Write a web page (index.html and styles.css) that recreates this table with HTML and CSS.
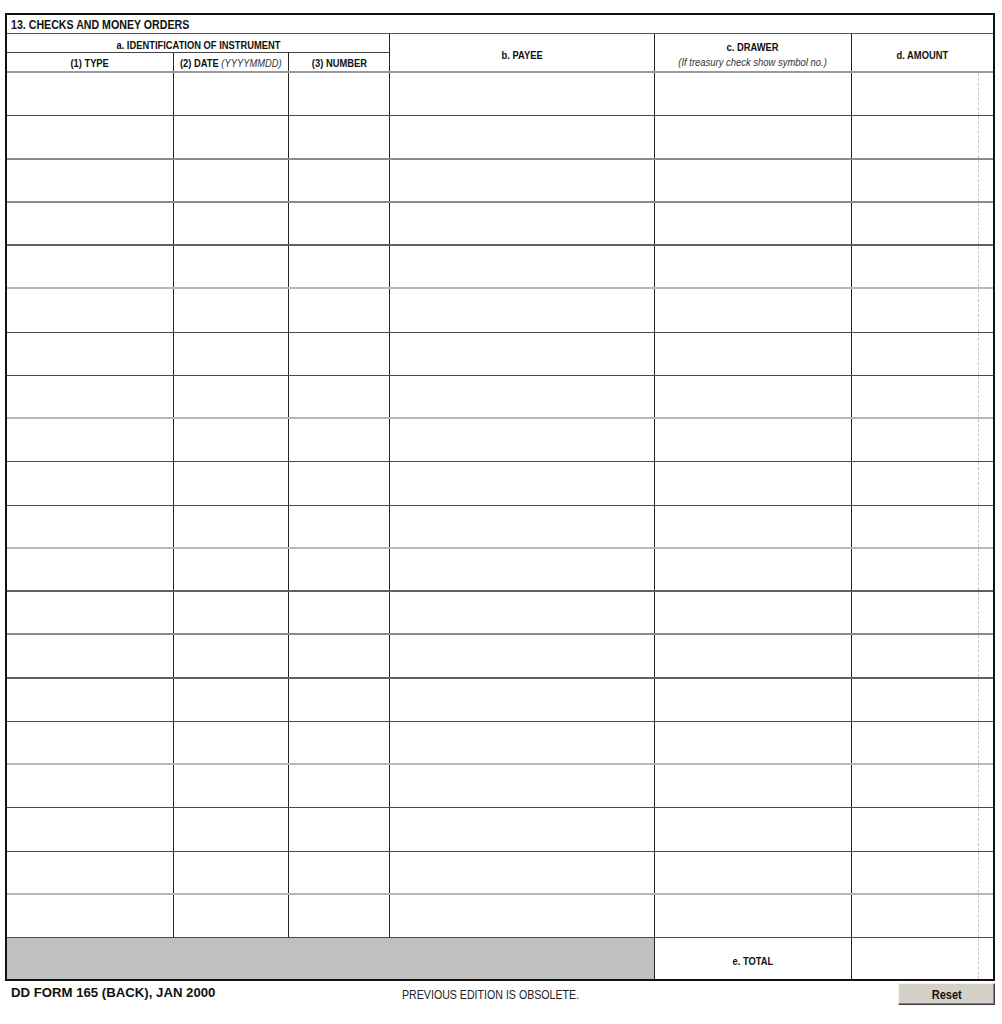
FILE: index.html
```html
<!DOCTYPE html>
<html>
<head>
<meta charset="utf-8">
<title>DD Form 165 (Back)</title>
<link rel="stylesheet" href="styles.css">
</head>
<body>
<div class="sheet">
  <div class="form">
    <div class="title"><span class="nl">13. CHECKS AND MONEY ORDERS</span></div>
    <div class="head">
      <div class="h-ident"><span class="nc">a. IDENTIFICATION OF INSTRUMENT</span></div>
      <div class="h-sub"><span class="nc">(1) TYPE</span></div>
      <div class="h-sub"><span class="nc">(2) DATE <i>(YYYYMMDD)</i></span></div>
      <div class="h-sub"><span class="nc">(3) NUMBER</span></div>
      <div class="h-payee"><span class="nc">b. PAYEE</span></div>
      <div class="h-drawer"><span class="nc">c. DRAWER</span><i class="nc">(If treasury check show symbol no.)</i></div>
      <div class="h-amount"><span class="nc">d. AMOUNT</span></div>
    </div>
    <div class="row ln-d"><div class="c"></div><div class="c"></div><div class="c"></div><div class="c"></div><div class="c"></div><div class="amt"><div class="dash"></div></div></div>
    <div class="row ln-m"><div class="c"></div><div class="c"></div><div class="c"></div><div class="c"></div><div class="c"></div><div class="amt"><div class="dash"></div></div></div>
    <div class="row ln-m"><div class="c"></div><div class="c"></div><div class="c"></div><div class="c"></div><div class="c"></div><div class="amt"><div class="dash"></div></div></div>
    <div class="row ln-k"><div class="c"></div><div class="c"></div><div class="c"></div><div class="c"></div><div class="c"></div><div class="amt"><div class="dash"></div></div></div>
    <div class="row ln-l"><div class="c"></div><div class="c"></div><div class="c"></div><div class="c"></div><div class="c"></div><div class="amt"><div class="dash"></div></div></div>
    <div class="row ln-d"><div class="c"></div><div class="c"></div><div class="c"></div><div class="c"></div><div class="c"></div><div class="amt"><div class="dash"></div></div></div>
    <div class="row ln-d"><div class="c"></div><div class="c"></div><div class="c"></div><div class="c"></div><div class="c"></div><div class="amt"><div class="dash"></div></div></div>
    <div class="row ln-l"><div class="c"></div><div class="c"></div><div class="c"></div><div class="c"></div><div class="c"></div><div class="amt"><div class="dash"></div></div></div>
    <div class="row ln-d"><div class="c"></div><div class="c"></div><div class="c"></div><div class="c"></div><div class="c"></div><div class="amt"><div class="dash"></div></div></div>
    <div class="row ln-d"><div class="c"></div><div class="c"></div><div class="c"></div><div class="c"></div><div class="c"></div><div class="amt"><div class="dash"></div></div></div>
    <div class="row ln-l"><div class="c"></div><div class="c"></div><div class="c"></div><div class="c"></div><div class="c"></div><div class="amt"><div class="dash"></div></div></div>
    <div class="row ln-k"><div class="c"></div><div class="c"></div><div class="c"></div><div class="c"></div><div class="c"></div><div class="amt"><div class="dash"></div></div></div>
    <div class="row ln-m"><div class="c"></div><div class="c"></div><div class="c"></div><div class="c"></div><div class="c"></div><div class="amt"><div class="dash"></div></div></div>
    <div class="row ln-k"><div class="c"></div><div class="c"></div><div class="c"></div><div class="c"></div><div class="c"></div><div class="amt"><div class="dash"></div></div></div>
    <div class="row ln-d"><div class="c"></div><div class="c"></div><div class="c"></div><div class="c"></div><div class="c"></div><div class="amt"><div class="dash"></div></div></div>
    <div class="row ln-l"><div class="c"></div><div class="c"></div><div class="c"></div><div class="c"></div><div class="c"></div><div class="amt"><div class="dash"></div></div></div>
    <div class="row ln-d"><div class="c"></div><div class="c"></div><div class="c"></div><div class="c"></div><div class="c"></div><div class="amt"><div class="dash"></div></div></div>
    <div class="row ln-d"><div class="c"></div><div class="c"></div><div class="c"></div><div class="c"></div><div class="c"></div><div class="amt"><div class="dash"></div></div></div>
    <div class="row ln-l"><div class="c"></div><div class="c"></div><div class="c"></div><div class="c"></div><div class="c"></div><div class="amt"><div class="dash"></div></div></div>
    <div class="row ln-d"><div class="c"></div><div class="c"></div><div class="c"></div><div class="c"></div><div class="c"></div><div class="amt"><div class="dash"></div></div></div>
    <div class="total">
      <div class="shade"></div>
      <div class="t-label"><span class="nc">e. TOTAL</span></div>
      <div class="amt"><div class="dash"></div></div>
    </div>
  </div>
  <div class="footer">
    <div class="f-form">DD FORM 165 (BACK), JAN 2000</div>
    <div class="f-prev"><span class="nl">PREVIOUS EDITION IS OBSOLETE.</span></div>
    <button class="reset" type="button"><span class="nc">Reset</span></button>
  </div>
</div>
</body>
</html>
```
FILE: styles.css
```css
html, body {
  margin: 0;
  padding: 0;
  background: #ffffff;
}

.sheet {
  padding: 13px 0 0 5px;
  width: 990px;
  font-family: "Liberation Sans", Arial, sans-serif;
  color: #111;
}

/* Arial Narrow look: the regular face, condensed horizontally */
.nl,
.nc {
  display: inline-block;
  white-space: nowrap;
  transform: scaleX(0.85);
}

.nl {
  transform-origin: left center;
}

.nc {
  transform-origin: center center;
}

.form {
  width: 990px;
  box-sizing: border-box;
  border: 2px solid #111;
}

.title {
  height: 15px;
  padding-top: 3px;
  border-bottom: 1px solid #555;
  font-weight: bold;
  font-size: 12.5px;
  line-height: 15px;
  padding-left: 4px;
}

.head,
.row {
  display: grid;
  grid-template-columns: 167px 115px 101px 265px 197px 1fr;
}

.head {
  grid-template-rows: 19px 18px;
  border-bottom: 2px solid #9a9a9a;
  font-weight: bold;
  font-size: 11px;
}

.head > div {
  display: flex;
  align-items: center;
  justify-content: center;
  text-align: center;
  box-sizing: border-box;
}

.head i {
  font-weight: normal;
  color: #333;
}

.h-ident {
  grid-column: 1 / 4;
  grid-row: 1;
  border-right: 1px solid #222;
  border-bottom: 1px solid #444;
  padding-top: 3px;
}

.h-sub {
  grid-row: 2;
  border-right: 1px solid #222;
  padding-top: 2px;
}

.h-payee {
  grid-column: 4;
  grid-row: 1 / 3;
  border-right: 1px solid #222;
  padding-top: 4px;
}

.h-drawer {
  grid-column: 5;
  grid-row: 1 / 3;
  border-right: 1px solid #222;
  flex-direction: column;
  line-height: 15px;
  padding-top: 4px;
}

.h-drawer i {
  font-size: 10.5px;
  transform: scaleX(0.9);
}

.h-amount {
  grid-column: 6;
  grid-row: 1 / 3;
  padding-top: 4px;
}

.row {
  height: 43.25px;
  box-sizing: border-box;
}

.c {
  border-right: 1px solid #222;
}

.amt {
  display: flex;
  justify-content: flex-end;
  padding-right: 14px;
}

.dash {
  border-right: 1px dashed #c8c8c8;
}

.ln-d { border-bottom: 1px solid #4a4a4a; }
.ln-k { border-bottom: 2px solid #606060; }
.ln-m { border-bottom: 2px solid #8a8a8a; }
.ln-l { border-bottom: 2px solid #b8b8b8; }

.total {
  display: grid;
  grid-template-columns: 648px 197px 1fr;
  height: 41px;
}

.shade {
  background: #c0c0c0;
  border-right: 1px solid #222;
}

.t-label {
  border-right: 1px solid #222;
  display: flex;
  align-items: center;
  justify-content: center;
  font-weight: bold;
  font-size: 11px;
  padding-top: 4px;
}

.footer {
  display: flex;
  align-items: flex-start;
  width: 990px;
  padding-top: 2px;
}

.f-form {
  width: 391px;
  padding-left: 6px;
  padding-top: 2px;
  font-weight: bold;
  font-size: 13.2px;
  line-height: 15px;
}

.f-prev {
  padding-top: 5px;
  font-size: 12.5px;
  line-height: 15px;
  color: #222;
}

.reset {
  margin-left: auto;
  width: 97px;
  height: 22px;
  background: #d4d0c8;
  border: 1px solid;
  border-color: #f4f4f4 #404040 #404040 #f4f4f4;
  box-shadow: inset -1px -1px 0 #808080;
  font-family: "Liberation Sans", Arial, sans-serif;
  font-weight: bold;
  font-size: 13px;
  color: #111;
  padding: 0;
}
```
